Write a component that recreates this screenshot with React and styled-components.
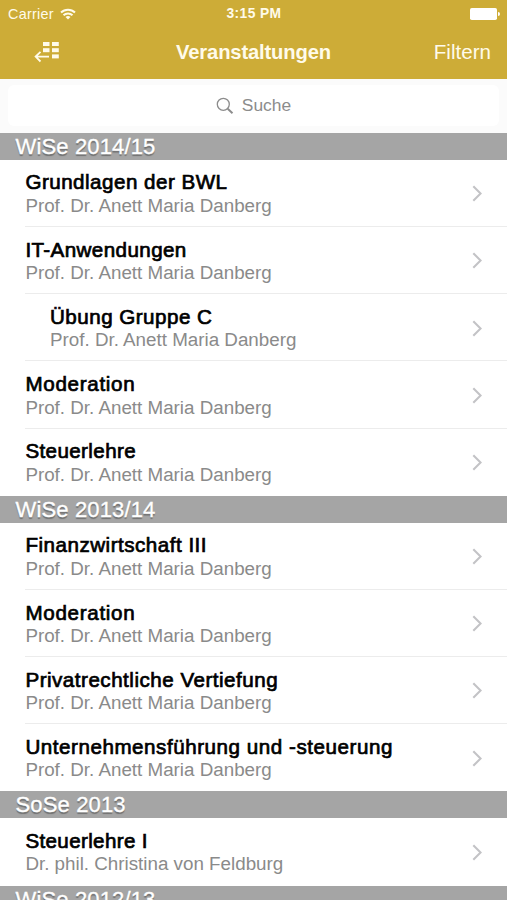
import React from 'react';
import styled, { createGlobalStyle } from 'styled-components';

const GlobalStyle = createGlobalStyle`
  * {
    box-sizing: border-box;
  }

  body {
    margin: 0;
    background: #ffffff;
    font-family: 'Liberation Sans', Arial, sans-serif;
    overflow: hidden;
  }
`;

const Screen = styled.div`
  width: 507px;
  height: 900px;
  overflow: hidden;
  background: #ffffff;
`;

const Header = styled.header`
  height: 79px;
  background: #cdac37;
  color: #fffbea;
`;

const StatusBar = styled.div`
  display: grid;
  grid-template-columns: 1fr auto 1fr;
  align-items: center;
  height: 27px;
  padding: 0 7px 0 8px;
`;

const Carrier = styled.div`
  display: flex;
  align-items: center;
  gap: 6px;
  font-size: 14.4px;
  letter-spacing: 0.25px;
`;

const Clock = styled.div`
  font-size: 13.8px;
  font-weight: 700;
  letter-spacing: 0.4px;
`;

const BatteryIcon = styled.svg`
  justify-self: end;
`;

const NavBar = styled.div`
  display: grid;
  grid-template-columns: 1fr auto 1fr;
  align-items: center;
  height: 50px;
  padding: 0 16px 0 34px;
`;

const BackButton = styled.button`
  display: flex;
  width: 26px;
  padding: 0;
  border: none;
  background: none;
`;

const NavTitle = styled.h1`
  margin: 0 18px 0 0;
  font-size: 20.2px;
  font-weight: 700;
  letter-spacing: -0.15px;
`;

const FilterButton = styled.button`
  justify-self: end;
  padding: 0;
  border: none;
  background: none;
  color: inherit;
  font-family: inherit;
  font-size: 20.6px;
`;

const SearchBar = styled.div`
  height: 54px;
  padding: 6px 8px;
  background: #fbfbfb;
`;

const SearchField = styled.div`
  display: flex;
  align-items: center;
  justify-content: center;
  gap: 8px;
  height: 41px;
  border-radius: 6px;
  background: #ffffff;
  color: #8c8c8c;
  font-size: 17.4px;
`;

const SectionHeader = styled.h2`
  height: 26.9px;
  margin: 0;
  padding-left: 15.5px;
  background: #a5a5a5;
  color: #ffffff;
  font-size: 22px;
  font-weight: 400;
  line-height: 27px;
  letter-spacing: 0.15px;
  text-shadow: 0 1.5px 1px rgba(0, 0, 0, 0.32);
  -webkit-text-stroke: 0.35px #ffffff;
`;

const Row = styled.div`
  display: flex;
  align-items: center;
  justify-content: space-between;
  height: 67.2px;
  margin-left: 25px;
  padding: 1.5px 25px 0 ${({ $indented }) => ($indented ? '25px' : '0.4px')};
  border-bottom: 1.5px solid #ececec;

  &:last-child {
    border-bottom-color: transparent;
  }
`;

const CourseName = styled.div`
  color: #000000;
  font-size: 20.6px;
  line-height: 23.5px;
  letter-spacing: ${({ $spacing }) => $spacing || 0.5}px;
  -webkit-text-stroke: 0.7px #000000;
`;

const Lecturer = styled.div`
  color: #8a8a8a;
  font-size: 18.8px;
  line-height: 23px;
`;

const WifiIcon = () => (
  <svg width="16" height="12" viewBox="0 0 16 12" fill="none" stroke="#fffbea" strokeWidth="2">
    <path d="M1 4.5 A10 10 0 0 1 15 4.5" />
    <path d="M3.5 7.3 A6.4 6.4 0 0 1 12.5 7.3" />
    <path d="M8 11.6 L5.5 9.1 A3.6 3.6 0 0 1 10.5 9.1 Z" fill="#fffbea" stroke="none" />
  </svg>
);

const Battery = () => (
  <BatteryIcon width="30" height="12" viewBox="0 0 30 12" fill="#ffffff">
    <rect x="0" y="0" width="27" height="12" rx="1.8" />
    <path d="M28 4 Q30 4.2 30 6 Q30 7.8 28 8 Z" />
  </BatteryIcon>
);

const GridBackIcon = () => (
  <svg width="26" height="22" viewBox="0 0 26 22" fill="#fffbea">
    <rect x="9" y="1" width="6.5" height="4" />
    <rect x="18" y="1" width="6.8" height="4" />
    <rect x="9" y="7.2" width="6.5" height="4" />
    <rect x="18" y="7.2" width="6.8" height="4" />
    <rect x="18" y="13.4" width="6.8" height="4" />
    <path d="M15 15.6 H2 M6.5 10.8 L1.6 15.6 L6.5 20.5" fill="none" stroke="#fffbea" strokeWidth="1.8" />
  </svg>
);

const SearchIcon = () => (
  <svg width="18" height="18" viewBox="0 0 18 18" fill="none" stroke="#8c8c8c">
    <circle cx="7.3" cy="7.3" r="6" strokeWidth="1.3" />
    <path d="M11.7 11.7 L16.5 16.3" strokeWidth="1.9" />
  </svg>
);

const Chevron = () => (
  <svg width="10" height="17" viewBox="0 0 10 17" fill="none" stroke="#c3c3c6" strokeWidth="2.1">
    <path d="M1.3 1.2 L8.6 8.5 L1.3 15.8" />
  </svg>
);

const danberg = 'Prof. Dr. Anett Maria Danberg';

const semesters = [
  {
    title: 'WiSe 2014/15',
    courses: [
      { name: 'Grundlagen der BWL', lecturer: danberg, spacing: 0.48 },
      { name: 'IT-Anwendungen', lecturer: danberg, spacing: 0.4 },
      { name: 'Übung Gruppe C', lecturer: danberg, spacing: 0.48, indented: true },
      { name: 'Moderation', lecturer: danberg, spacing: 0.7 },
      { name: 'Steuerlehre', lecturer: danberg, spacing: 0.38 },
    ],
  },
  {
    title: 'WiSe 2013/14',
    courses: [
      { name: 'Finanzwirtschaft III', lecturer: danberg },
      { name: 'Moderation', lecturer: danberg, spacing: 0.7 },
      { name: 'Privatrechtliche Vertiefung', lecturer: danberg },
      { name: 'Unternehmensführung und -steuerung', lecturer: danberg, spacing: 0.54 },
    ],
  },
  {
    title: 'SoSe 2013',
    courses: [{ name: 'Steuerlehre I', lecturer: 'Dr. phil. Christina von Feldburg', spacing: 0.35 }],
  },
  { title: 'WiSe 2012/13', courses: [] },
];

const App = () => (
  <>
    <GlobalStyle />
    <Screen>
      <Header>
        <StatusBar>
          <Carrier>
            Carrier
            <WifiIcon />
          </Carrier>
          <Clock>3:15 PM</Clock>
          <Battery />
        </StatusBar>
        <NavBar>
          <BackButton>
            <GridBackIcon />
          </BackButton>
          <NavTitle>Veranstaltungen</NavTitle>
          <FilterButton>Filtern</FilterButton>
        </NavBar>
      </Header>
      <SearchBar>
        <SearchField>
          <SearchIcon />
          <span>Suche</span>
        </SearchField>
      </SearchBar>
      {semesters.map((semester) => (
        <section key={semester.title}>
          <SectionHeader>{semester.title}</SectionHeader>
          {semester.courses.map((course) => (
            <Row key={course.name} $indented={course.indented}>
              <div>
                <CourseName $spacing={course.spacing}>{course.name}</CourseName>
                <Lecturer>{course.lecturer}</Lecturer>
              </div>
              <Chevron />
            </Row>
          ))}
        </section>
      ))}
    </Screen>
  </>
);

export default App;
